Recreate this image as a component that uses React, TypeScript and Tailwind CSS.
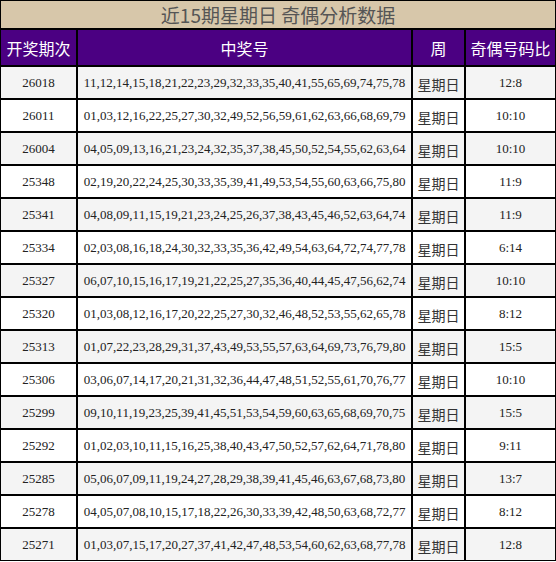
const rows: [string, string, string][] = [
  ["26018", "11,12,14,15,18,21,22,23,29,32,33,35,40,41,55,65,69,74,75,78", "12:8"],
  ["26011", "01,03,12,16,22,25,27,30,32,49,52,56,59,61,62,63,66,68,69,79", "10:10"],
  ["26004", "04,05,09,13,16,21,23,24,32,35,37,38,45,50,52,54,55,62,63,64", "10:10"],
  ["25348", "02,19,20,22,24,25,30,33,35,39,41,49,53,54,55,60,63,66,75,80", "11:9"],
  ["25341", "04,08,09,11,15,19,21,23,24,25,26,37,38,43,45,46,52,63,64,74", "11:9"],
  ["25334", "02,03,08,16,18,24,30,32,33,35,36,42,49,54,63,64,72,74,77,78", "6:14"],
  ["25327", "06,07,10,15,16,17,19,21,22,25,27,35,36,40,44,45,47,56,62,74", "10:10"],
  ["25320", "01,03,08,12,16,17,20,22,25,27,30,32,46,48,52,53,55,62,65,78", "8:12"],
  ["25313", "01,07,22,23,28,29,31,37,43,49,53,55,57,63,64,69,73,76,79,80", "15:5"],
  ["25306", "03,06,07,14,17,20,21,31,32,36,44,47,48,51,52,55,61,70,76,77", "10:10"],
  ["25299", "09,10,11,19,23,25,39,41,45,51,53,54,59,60,63,65,68,69,70,75", "15:5"],
  ["25292", "01,02,03,10,11,15,16,25,38,40,43,47,50,52,57,62,64,71,78,80", "9:11"],
  ["25285", "05,06,07,09,11,19,24,27,28,29,38,39,41,45,46,63,67,68,73,80", "13:7"],
  ["25278", "04,05,07,08,10,15,17,18,22,26,30,33,39,42,48,50,63,68,72,77", "8:12"],
  ["25271", "01,03,07,15,17,20,27,37,41,42,47,48,53,54,60,62,63,68,77,78", "12:8"],
]

const cjk = "font-['Noto_Sans_CJK_SC',sans-serif]"
const serif = "font-['Liberation_Serif','Noto_Sans_CJK_SC',serif]"

export default function App() {
  return (
    <div className="w-[556px] bg-white">
      <table className="w-[556px] table-fixed border-separate border-spacing-0">
        <colgroup>
          <col className="w-[77px]" />
          <col className="w-[335px]" />
          <col className="w-[53px]" />
          <col className="w-[91px]" />
        </colgroup>
        <thead>
          <tr className="h-[29px]">
            <th
              colSpan={4}
              className={`border border-black bg-[#d7c7aa] p-0 text-center text-[19px] font-normal leading-none text-[#555] ${cjk}`}
            >
              近15期星期日 奇偶分析数据
            </th>
          </tr>
          <tr className={`h-[37px] bg-[#4b0082] text-[16px] font-normal text-white ${cjk}`}>
            <th className="border border-black p-0 font-normal">开奖期次</th>
            <th className="border border-black p-0 font-normal">中奖号</th>
            <th className="border border-black p-0 font-normal">周</th>
            <th className="border border-black p-0 font-normal">奇偶号码比</th>
          </tr>
        </thead>
        <tbody>
          {rows.map(([issue, nums, ratio], i) => (
            <tr
              key={issue}
              className={`h-[33px] text-center text-[13px] text-[#222] ${i % 2 === 0 ? "bg-[#f4f4f4]" : "bg-white"}`}
            >
              <td className={`border border-black p-0 ${serif}`}>{issue}</td>
              <td className={`border border-black p-0 whitespace-nowrap ${serif}`}>{nums}</td>
              <td className={`border border-black p-0 pt-[3px] text-[14px] text-[#333] ${cjk}`}>星期日</td>
              <td className={`border border-black p-0 ${serif}`}>{ratio}</td>
            </tr>
          ))}
        </tbody>
      </table>
    </div>
  )
}
